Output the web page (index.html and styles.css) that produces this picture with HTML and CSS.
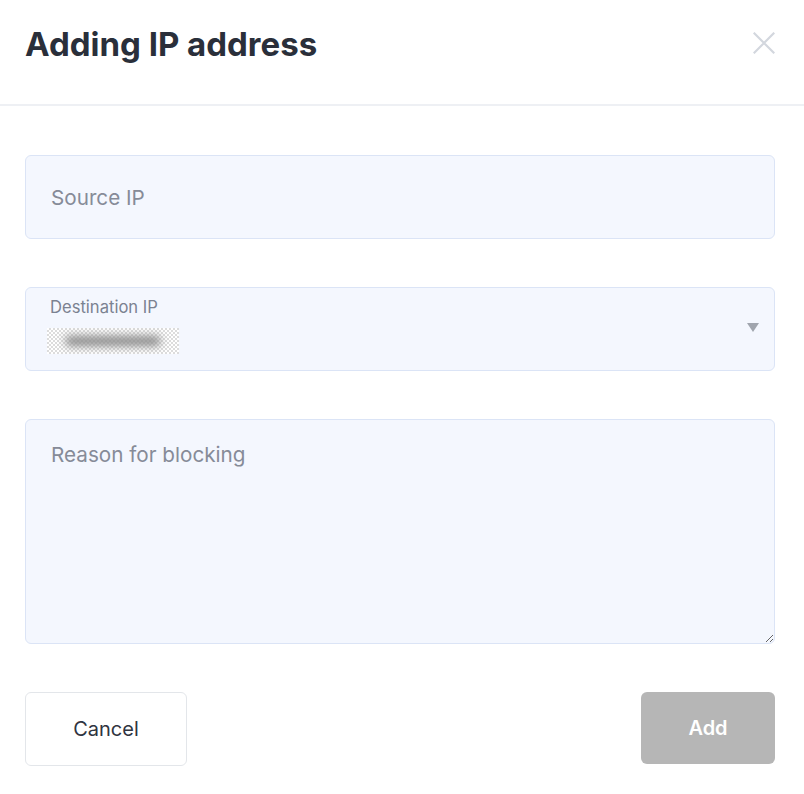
FILE: index.html
```html
<!DOCTYPE html>
<html lang="en">
	<head>
		<meta charset="UTF-8" />
		<meta name="viewport" content="width=device-width, initial-scale=1.0" />
		<title>Adding IP address</title>
		<link rel="stylesheet" href="styles.css">
	</head>
	<body>
		<div class="modal">
			<div class="modal-header">
				<h2>Adding IP address</h2>
				<button class="close-button" aria-label="Close">
					<svg width="22" height="22" viewBox="0 0 22 22" fill="none" stroke="#d3d7de" stroke-width="2.2" stroke-linecap="square">
						<path d="M1.5 1.5 L20.5 20.5 M20.5 1.5 L1.5 20.5" />
					</svg>
				</button>
			</div>

			<div class="modal-body">
				<input type="text" class="field" placeholder="Source IP" />

				<div class="field select-field">
					<div class="select-text">
						<span class="select-label">Destination IP</span>
						<span class="masked-value"><span class="masked-blur"></span></span>
					</div>
					<span class="select-arrow"></span>
				</div>

				<textarea class="field textarea-field" placeholder="Reason for blocking"></textarea>

				<div class="actions">
					<button class="btn btn-cancel">Cancel</button>
					<button class="btn btn-add" disabled>Add</button>
				</div>
			</div>
		</div>
	</body>
</html>
```

FILE: styles.css
```css
body {
	font-family: Inter, 'Noto Sans', sans-serif;
	margin: 0;
	background-color: #fff;
	color: #2a2f3a;
}
.modal {
	width: 804px;
}
.modal-header {
	display: flex;
	justify-content: space-between;
	align-items: center;
	height: 106px;
	padding: 0 29px 0 25px;
	border-bottom: 2px solid #eef0f4;
	box-sizing: border-box;
}
.modal-header h2 {
	margin: 0 0 16px;
	font-size: 33px;
	font-weight: 700;
	color: #2a2f3a;
}
.close-button {
	border: none;
	background: none;
	padding: 0;
	margin-bottom: 18px;
	cursor: pointer;
	display: flex;
}
.modal-body {
	padding: 49px 29px 0 25px;
	display: flex;
	flex-direction: column;
	gap: 48px;
}
.field {
	box-sizing: border-box;
	width: 750px;
	height: 84px;
	padding: 0 25px;
	border: 1px solid #dbe4f6;
	border-radius: 6px;
	background-color: #f4f7fe;
	font-family: inherit;
	font-size: 20.7px;
	color: #2a2f3a;
	outline: none;
}
.field::placeholder {
	color: #868b98;
}
.select-field {
	display: flex;
	align-items: center;
	justify-content: space-between;
	padding: 0 15px 0 21px;
}
.select-text {
	display: flex;
	flex-direction: column;
	margin-top: -8px;
}
.select-label {
	font-size: 16.6px;
	color: #7b8291;
	padding-left: 3px;
	line-height: 22px;
}
.masked-value {
	display: flex;
	align-items: center;
	width: 132px;
	height: 26px;
	margin-top: 10px;
	background-color: #fff;
	background-image: repeating-conic-gradient(#dcdcdc 0% 25%, #fff 0% 50%);
	background-size: 4px 4px;
	overflow: hidden;
}
.masked-blur {
	display: block;
	width: 96px;
	height: 10px;
	margin-left: 18px;
	background-color: #8c8c8c;
	border-radius: 5px;
	filter: blur(4px);
}
.select-arrow {
	width: 0;
	height: 0;
	border-left: 6px solid transparent;
	border-right: 6px solid transparent;
	border-top: 9px solid #a0a5ae;
	margin-top: -4px;
}
.textarea-field {
	height: 225px;
	padding: 22px 25px;
	resize: vertical;
	line-height: 26px;
}
.actions {
	display: flex;
	justify-content: space-between;
	align-items: flex-start;
}
.btn {
	font-family: inherit;
	font-size: 20px;
	border-radius: 6px;
	cursor: pointer;
}
.btn-cancel {
	width: 162px;
	height: 74px;
	background-color: #fff;
	border: 1px solid #e3e6ea;
	color: #2f3440;
}
.btn-add {
	width: 134px;
	height: 72px;
	background-color: #b6b6b6;
	border: none;
	color: #fff;
	font-weight: 600;
	cursor: default;
}
```
